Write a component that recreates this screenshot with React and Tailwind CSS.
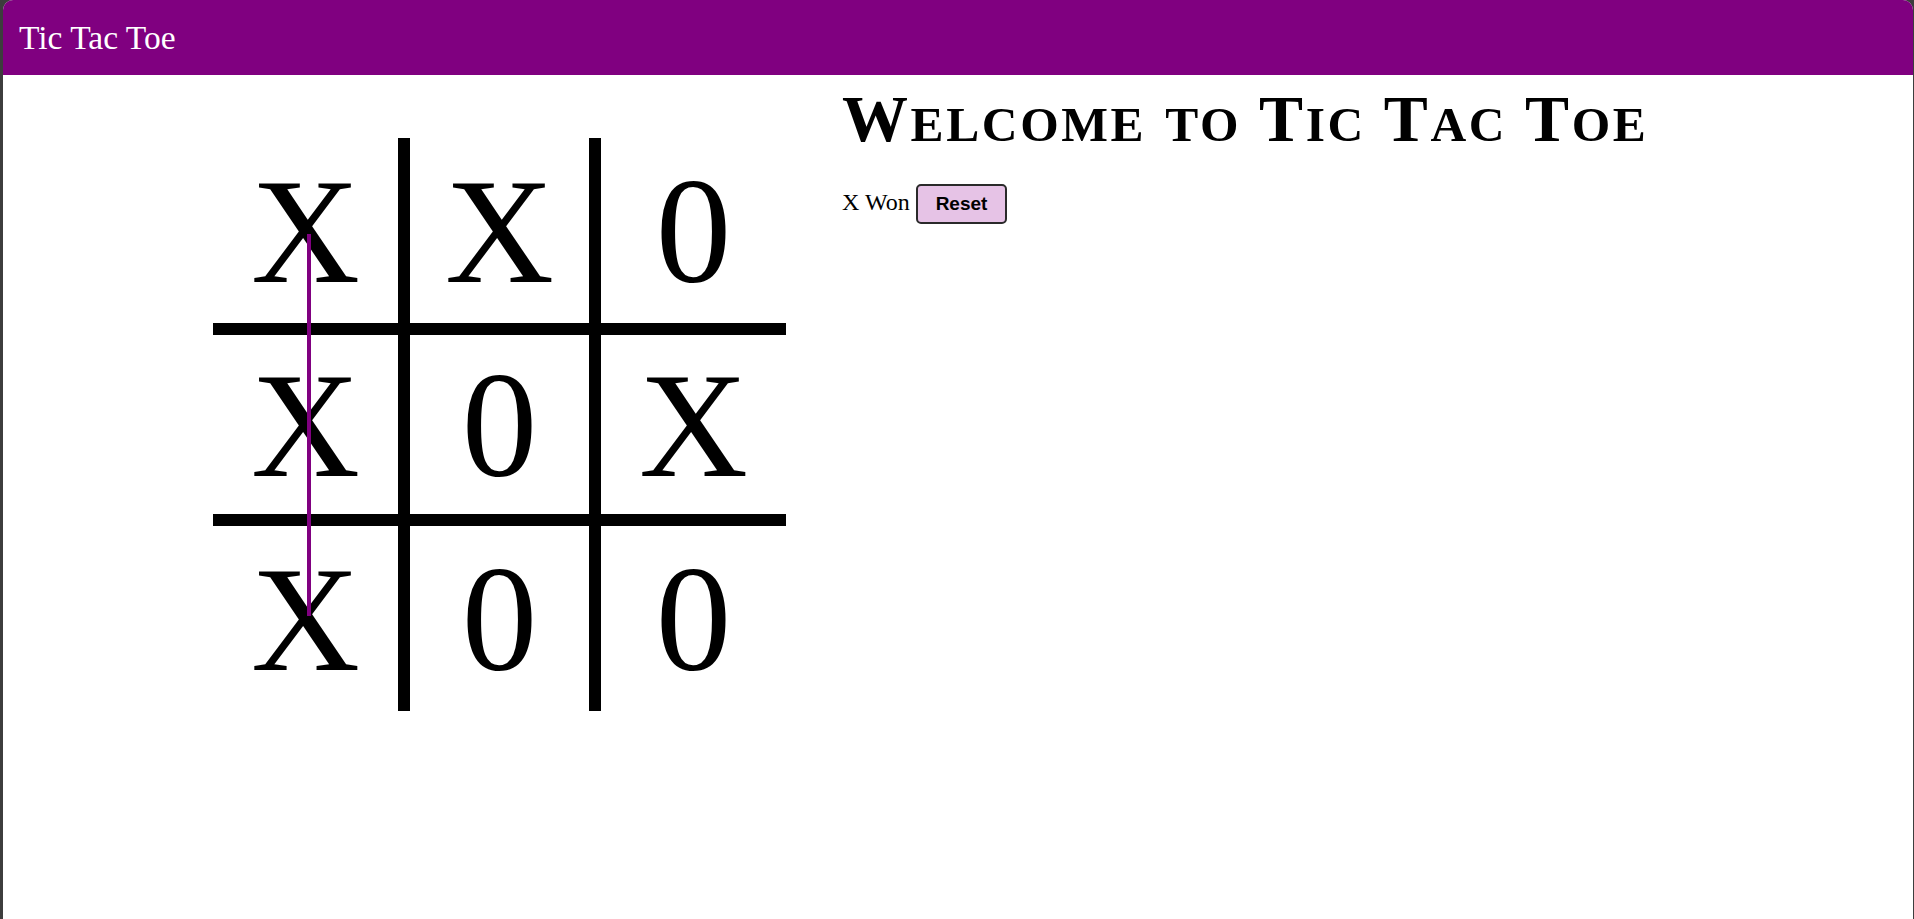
import { useState } from 'react';

const WINS = [
    [0, 1, 2], [3, 4, 5], [6, 7, 8],
    [0, 3, 6], [1, 4, 7], [2, 5, 8],
    [0, 4, 8], [2, 4, 6]
];

function getWinner(board) {
    for (const line of WINS) {
        const [a, b, c] = line;
        if (board[a] && board[a] === board[b] && board[a] === board[c]) {
            return { player: board[a], line };
        }
    }
    return null;
}

// border classes per cell, so the inner lines are 12px (6px from each side)
const cellBorders = [
    'border-r-[6px] border-b-[6px]',
    'border-x-[6px] border-b-[6px]',
    'border-l-[6px] border-b-[6px]',
    'border-r-[6px] border-y-[6px]',
    'border-[6px]',
    'border-l-[6px] border-y-[6px]',
    'border-r-[6px] border-t-[6px]',
    'border-x-[6px] border-t-[6px]',
    'border-l-[6px] border-t-[6px]'
];

const START = ['X', 'X', '0', 'X', '0', 'X', 'X', '0', '0'];

// small caps by hand: first letter of each word full size, the rest smaller
function SmallCaps({ text }) {
    return text.split(' ').map((word, i) => (
        <span key={i}>
            {i > 0 && ' '}
            {/^[A-Z]/.test(word) ? word[0] : ''}
            <span className="text-[0.75em]">
                {(/^[A-Z]/.test(word) ? word.slice(1) : word).toUpperCase()}
            </span>
        </span>
    ));
}

export default function App() {
    const [board, setBoard] = useState(START);
    const [turn, setTurn] = useState('X');
    const winner = getWinner(board);

    const handleClick = (i) => {
        if (board[i] || winner) return;
        const next = [...board];
        next[i] = turn;
        setBoard(next);
        setTurn(turn === 'X' ? '0' : 'X');
    };

    const reset = () => {
        setBoard(Array(9).fill(''));
        setTurn('X');
    };

    // win line, from the centre of the first cell to the centre of the last
    let lineStyle = null;
    if (winner) {
        const [a, , c] = winner.line;
        const x1 = (a % 3) * 191 + 95.5, y1 = Math.floor(a / 3) * 191 + 95.5;
        const x2 = (c % 3) * 191 + 95.5, y2 = Math.floor(c / 3) * 191 + 95.5;
        const len = Math.hypot(x2 - x1, y2 - y1);
        const angle = Math.atan2(y2 - y1, x2 - x1) * 180 / Math.PI;
        lineStyle = {
            left: x1,
            top: y1,
            width: len,
            transform: `rotate(${angle}deg)`
        };
    }

    const status = winner
        ? `${winner.player} Won`
        : board.every(Boolean) ? 'Draw' : `${turn}'s turn`;

    return (
        <div className="h-[919px] bg-[#3d3d3d] overflow-hidden">
            <div className="ml-[3px] mr-[1px] h-full rounded-t-[10px] overflow-hidden bg-white font-['Liberation_Serif',serif] text-black">
                {/* HEADER */}
                <header className="h-[75px] bg-[#800080] flex items-center pl-[16px]">
                    <span className="text-white text-[33.5px] pt-[2px]">Tic Tac Toe</span>
                </header>

                <div className="flex items-start">
                    {/* BOARD */}
                    <div className="ml-[210px] mt-[63px] relative grid grid-cols-[repeat(3,191px)] grid-rows-[repeat(3,191px)]">
                        {board.map((v, i) => (
                            <div
                                key={i}
                                onClick={() => handleClick(i)}
                                className={`${cellBorders[i]} border-black flex items-center justify-center pt-[2px] text-[151px] leading-[1.15] cursor-pointer select-none`}
                            >
                                {v}
                            </div>
                        ))}
                        {lineStyle && (
                            <div
                                className="absolute h-[4px] -mt-[2px] bg-[#800080] origin-left"
                                style={lineStyle}
                            />
                        )}
                    </div>

                    {/* INFO */}
                    <div className="ml-[56px] pt-[11px]">
                        <h1 className="text-[66px] leading-none font-bold tracking-[2.6px] whitespace-nowrap">
                            <SmallCaps text="Welcome to Tic Tac Toe" />
                        </h1>
                        <p className="mt-[32px] text-[24px]">
                            {status}{' '}
                            <button
                                onClick={reset}
                                className="font-['Liberation_Sans',sans-serif] font-bold text-[19px] leading-[22px] px-[18px] py-[7px] bg-[#e6c3e6] border-2 border-[#2a2a2a] rounded-[5px] tracking-normal"
                            >
                                Reset
                            </button>
                        </p>
                    </div>
                </div>
            </div>
        </div>
    );
}
